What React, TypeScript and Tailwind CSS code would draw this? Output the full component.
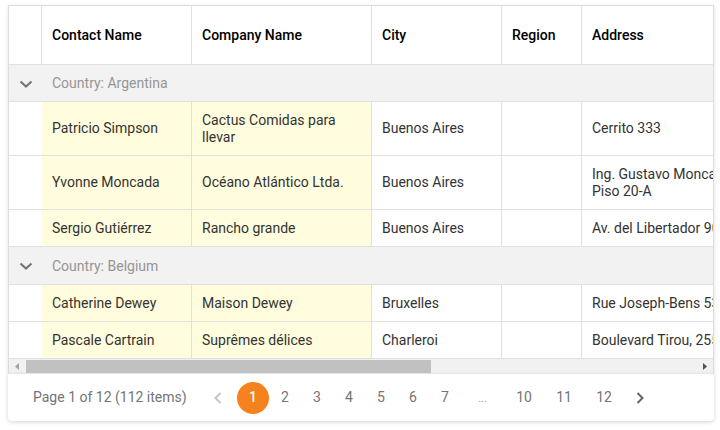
import React from "react";

const W = { c0: "w-[33px]", c1: "w-[150px]", c2: "w-[180px]", c3: "w-[130px]", c4: "w-[80px]", c5: "w-[200px]" };

type Row = { contact: string; company: React.ReactNode; city: string; region: string; address: React.ReactNode; h: string };

const Chevron = () => (
  <svg width="14" height="14" viewBox="0 0 14 14" fill="none">
    <path d="M1.5 4.5 L7 9.5 L12.5 4.5" stroke="#757575" strokeWidth="2.2" strokeLinecap="butt" />
  </svg>
);

function DataRow({ r }: { r: Row }) {
  const cell = "shrink-0 flex items-center px-[10px] leading-[17px] border-r border-[#e0e0e0]";
  return (
    <div className={`flex ${r.h} border-b border-[#e0e0e0] text-[14px] text-[#333]`}>
      <div className={`${W.c0} shrink-0 bg-white`} />
      <div className={`${W.c1} ${cell} bg-[#fffddd]`}>{r.contact}</div>
      <div className={`${W.c2} ${cell} bg-[#fffddd]`}>{r.company}</div>
      <div className={`${W.c3} ${cell}`}>{r.city}</div>
      <div className={`${W.c4} ${cell}`}>{r.region}</div>
      <div className={`${W.c5} shrink-0 flex items-center px-[10px] leading-[17px] whitespace-nowrap`}>{r.address}</div>
    </div>
  );
}

function GroupRow({ label, h }: { label: string; h: string }) {
  return (
    <div className={`flex ${h} items-center border-b border-[#e0e0e0] bg-[#f2f2f2] text-[14px] text-[#959595] pt-[1px]`}>
      <div className={`${W.c0} shrink-0 flex justify-center`}>
        <Chevron />
      </div>
      <div className="pl-[10px]">{label}</div>
    </div>
  );
}

export default function App() {
  const hcell = "shrink-0 flex items-center px-[10px] border-r border-[#e0e0e0]";
  const argentina: Row[] = [
    { contact: "Patricio Simpson", company: "Cactus Comidas para llevar", city: "Buenos Aires", region: "", address: "Cerrito 333", h: "h-[54px]" },
    { contact: "Yvonne Moncada", company: "Océano Atlántico Ltda.", city: "Buenos Aires", region: "", address: <span>Ing. Gustavo Moncada 8585<br />Piso 20-A</span>, h: "h-[54px]" },
    { contact: "Sergio Gutiérrez", company: "Rancho grande", city: "Buenos Aires", region: "", address: "Av. del Libertador 900", h: "h-[37px]" },
  ];
  const belgium: Row[] = [
    { contact: "Catherine Dewey", company: "Maison Dewey", city: "Bruxelles", region: "", address: "Rue Joseph-Bens 532", h: "h-[37px]" },
    { contact: "Pascale Cartrain", company: "Suprêmes délices", city: "Charleroi", region: "", address: "Boulevard Tirou, 255", h: "h-[37px]" },
  ];
  const pageBtn = "w-8 h-8 flex items-center justify-center shrink-0";
  return (
    <div className="w-[720px] h-[430px] bg-white pl-[8px] pt-[5px]" style={{ fontFamily: "Roboto, 'Liberation Sans', sans-serif" }}>
      <div className="w-[706px] border-x border-t border-[#dddddd] shadow-[0_1px_4px_rgba(0,0,0,0.12)] overflow-hidden">
        <div className="w-[773px]">
          <div className="flex h-[59px] border-b border-[#e0e0e0] text-[14px] font-medium text-black">
            <div className={`${W.c0} ${hcell}`} />
            <div className={`${W.c1} ${hcell}`}>Contact Name</div>
            <div className={`${W.c2} ${hcell}`}>Company Name</div>
            <div className={`${W.c3} ${hcell}`}>City</div>
            <div className={`${W.c4} ${hcell}`}>Region</div>
            <div className={`${W.c5} shrink-0 flex items-center px-[10px]`}>Address</div>
          </div>
          <GroupRow label="Country: Argentina" h="h-[37px]" />
          {argentina.map((r, i) => (
            <DataRow key={i} r={r} />
          ))}
          <GroupRow label="Country: Belgium" h="h-[38px]" />
          {belgium.map((r, i) => (
            <DataRow key={i} r={r} />
          ))}
        </div>
        <div className="flex h-[15px] bg-[#f1f1f1]">
          <div className="w-[17px] shrink-0 flex items-center justify-center">
            <svg width="5" height="7" viewBox="0 0 5 7"><path d="M4 0 L0 3.5 L4 7 Z" fill="#a3a3a3" /></svg>
          </div>
          <div className="w-[405px] shrink-0 bg-[#c1c1c1] my-[1px]" />
          <div className="flex-1" />
          <div className="w-[17px] shrink-0 flex items-center justify-center">
            <svg width="5" height="7" viewBox="0 0 5 7"><path d="M1 0 L5 3.5 L1 7 Z" fill="#505050" /></svg>
          </div>
        </div>
      </div>
      <div className="w-[706px] h-[47px] bg-white rounded-b-[4px] shadow-[0_1px_4px_rgba(0,0,0,0.18)] flex items-center pl-[25px] text-[14px] text-[#757575]">
        <span className="w-[169px] shrink-0">Page 1 of 12 (112 items)</span>
        <div className={pageBtn}>
          <svg width="10" height="14" viewBox="0 0 10 14" fill="none"><path d="M7.5 2 L2.5 7 L7.5 12" stroke="#c4c4c4" strokeWidth="2" /></svg>
        </div>
        <div className="w-[3px] shrink-0" />
        <div className={pageBtn}>
          <div className="w-8 h-8 rounded-full bg-[#f5821f] text-white font-medium flex items-center justify-center">1</div>
        </div>
        {["2", "3", "4", "5", "6", "7"].map((n) => (
          <div key={n} className={pageBtn}>{n}</div>
        ))}
        <div className="w-[43px] h-8 flex items-center justify-center shrink-0 text-[#999] text-[11px] pt-[3px]">...</div>
        {["10", "11", "12"].map((n) => (
          <div key={n} className="w-10 h-8 flex items-center justify-center shrink-0">{n}</div>
        ))}
        <div className={pageBtn}>
          <svg width="10" height="14" viewBox="0 0 10 14" fill="none"><path d="M2.5 2 L7.5 7 L2.5 12" stroke="#666666" strokeWidth="2" /></svg>
        </div>
      </div>
    </div>
  );
}
